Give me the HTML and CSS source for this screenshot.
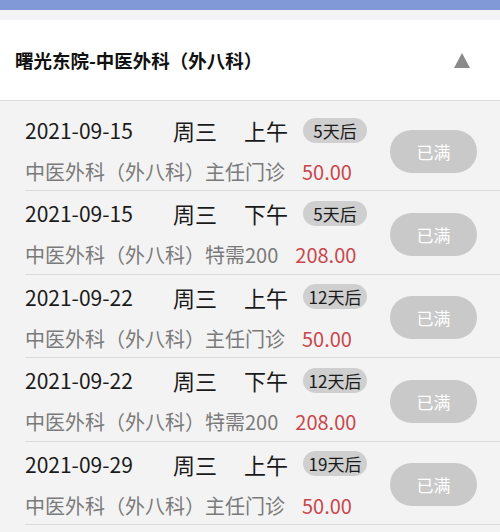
FILE: index.html
```html
<!DOCTYPE html>
<html lang="zh-CN">
<head>
<meta charset="utf-8">
<link rel="stylesheet" href="styles.css">
</head>
<body>
<div class="topbar"></div>
<div class="strip"></div>
<div class="header">
  <div class="title">曙光东院-中医外科（外八科）</div>
  <div class="arrow"></div>
</div>
<div class="list">
  <div class="row">
    <div class="info">
      <div class="line1"><span class="date">2021-09-15</span><span class="week">周三</span><span class="ampm">上午</span><span class="badge">5天后</span></div>
      <div class="line2"><span class="desc">中医外科（外八科）主任门诊</span><span class="price">50.00</span></div>
    </div>
    <div class="btn">已满</div>
  </div>
  <div class="row">
    <div class="info">
      <div class="line1"><span class="date">2021-09-15</span><span class="week">周三</span><span class="ampm">下午</span><span class="badge">5天后</span></div>
      <div class="line2"><span class="desc">中医外科（外八科）特需200</span><span class="price">208.00</span></div>
    </div>
    <div class="btn">已满</div>
  </div>
  <div class="row">
    <div class="info">
      <div class="line1"><span class="date">2021-09-22</span><span class="week">周三</span><span class="ampm">上午</span><span class="badge">12天后</span></div>
      <div class="line2"><span class="desc">中医外科（外八科）主任门诊</span><span class="price">50.00</span></div>
    </div>
    <div class="btn">已满</div>
  </div>
  <div class="row">
    <div class="info">
      <div class="line1"><span class="date">2021-09-22</span><span class="week">周三</span><span class="ampm">下午</span><span class="badge">12天后</span></div>
      <div class="line2"><span class="desc">中医外科（外八科）特需200</span><span class="price">208.00</span></div>
    </div>
    <div class="btn">已满</div>
  </div>
  <div class="row">
    <div class="info">
      <div class="line1"><span class="date">2021-09-29</span><span class="week">周三</span><span class="ampm">上午</span><span class="badge">19天后</span></div>
      <div class="line2"><span class="desc">中医外科（外八科）主任门诊</span><span class="price">50.00</span></div>
    </div>
    <div class="btn">已满</div>
  </div>
</div>
</body>
</html>
```
FILE: styles.css
```css
html, body {
  margin: 0;
  padding: 0;
}
body {
  width: 500px;
  height: 532px;
  overflow: hidden;
  background: #f3f3f3;
  font-family: "Noto Sans CJK SC", "Noto Sans", sans-serif;
  color: #1a1a1a;
}
.topbar {
  height: 10px;
  background: #8199d7;
}
.strip {
  height: 10px;
  background: #f3f3f6;
}
.header {
  height: 80px;
  background: #ffffff;
  border-bottom: 1px solid #dcdcdc;
  display: flex;
  align-items: center;
  justify-content: space-between;
  padding: 0 30px 0 15px;
}
.title {
  font-size: 18.5px;
  font-weight: 700;
  color: #111;
}
.arrow {
  width: 0;
  height: 0;
  border-left: 8px solid transparent;
  border-right: 8px solid transparent;
  border-bottom: 15px solid #8a8a8a;
}
.list {
  padding: 7px 0 0 25px;
}
.row {
  height: 82.4px;
  border-bottom: 1px solid #dadada;
  display: flex;
  justify-content: space-between;
  align-items: center;
}
.info {
  align-self: flex-start;
  padding-top: 7px;
}
.line1 {
  display: flex;
  align-items: center;
  height: 30px;
}
.date {
  width: 148px;
  font-size: 21px;
}
.week {
  width: 71px;
  font-size: 22px;
}
.ampm {
  width: 59px;
  font-size: 22px;
}
.badge {
  width: 64px;
  height: 25px;
  border-radius: 13px;
  background: #cfcfcf;
  font-size: 17px;
  line-height: 25px;
  text-align: center;
  color: #1a1a1a;
}
.line2 {
  margin-top: 12px;
  height: 30px;
  line-height: 30px;
  font-size: 20px;
}
.desc {
  color: #7a7a7a;
}
.price {
  margin-left: 17px;
  color: #c8474c;
}
.btn {
  width: 87px;
  height: 43px;
  margin: 4px 23px 0 0;
  border-radius: 22px;
  background: #c9c9c9;
  color: #ffffff;
  font-size: 17px;
  line-height: 43px;
  text-align: center;
}
```
